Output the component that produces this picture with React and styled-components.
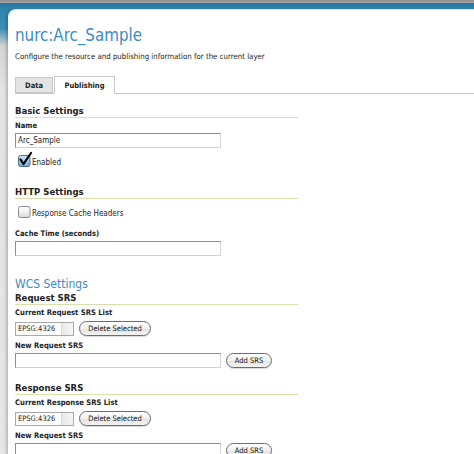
import React from 'react';
import styled, { createGlobalStyle } from 'styled-components';

const FONT = `"DejaVu Sans Condensed", "Liberation Sans", sans-serif`;

const GlobalStyle = createGlobalStyle`
  html, body {
    margin: 0;
    padding: 0;
  }
  body {
    background: #e6e6e6;
    font-family: ${FONT};
    color: #222;
  }
`;

const Page = styled.div`
  width: 474px;
  height: 454px;
  overflow: hidden;
  box-sizing: border-box;
  padding: 9px 0 0 8px;
  background: linear-gradient(
    to bottom,
    #8a8a8a 0,
    #a9a9a9 3px,
    #26769e 3px,
    #2f84ad 9px,
    #3a8cb3 28px,
    #d4d4d4 46px,
    #e3e3e3 90px,
    #e6e6e6 100%
  );
`;

const Panel = styled.div`
  height: 100%;
  box-sizing: border-box;
  background: #fff;
  border-top: 1px solid #cfe8f2;
  border-top-left-radius: 8px;
  box-shadow: -2px 1px 3px rgba(0, 0, 0, 0.2);
  padding-left: 7px;
`;

const Title = styled.h1`
  margin: 16px 0 0;
  font-size: 16.8px;
  line-height: 18px;
  font-weight: normal;
  color: #3a8cc4;
`;

const Intro = styled.p`
  margin: 8px 0 0;
  font-size: 7.8px;
  line-height: 10px;
`;

const TabBar = styled.div`
  display: flex;
  align-items: flex-end;
  height: 17px;
  margin-top: 14px;
  border-bottom: 1px solid #c4c4c4;
`;

const Tab = styled.div`
  box-sizing: border-box;
  display: flex;
  align-items: center;
  justify-content: center;
  font-size: 7.5px;
  font-weight: bold;
  border: 1px solid #c8c8c8;
  width: ${p => p.$width}px;
  height: ${p => (p.$active ? 18 : 16)}px;
  margin-left: ${p => (p.$active ? 1 : 0)}px;
  margin-bottom: ${p => (p.$active ? -1 : 0)}px;
  background: ${p => (p.$active ? '#fff' : '#e4e4e4')};
  border-bottom-color: ${p => (p.$active ? '#fff' : '#c8c8c8')};
  padding-top: ${p => (p.$active ? 1 : 0)}px;
`;

const SectionTitle = styled.h2`
  width: 283px;
  margin: ${p => p.$top}px 0 0;
  font-size: 9.5px;
  line-height: 12px;
  font-weight: bold;
  border-bottom: 1px solid #d9deab;
`;

const GroupTitle = styled.h2`
  margin: 20px 0 0;
  font-size: 12px;
  line-height: 16px;
  font-weight: normal;
  color: #3a8cc4;
`;

const Label = styled.div`
  margin-top: ${p => p.$top}px;
  font-size: 7.6px;
  line-height: 10px;
  font-weight: bold;
`;

const TextInput = styled.input`
  display: block;
  box-sizing: border-box;
  width: 206px;
  height: 15px;
  margin: 0;
  padding: 0 2px;
  font-family: ${FONT};
  font-size: 8px;
  color: #222;
  border: 1px solid;
  border-color: #8f8f8f #d2d2d2 #d2d2d2 #8f8f8f;
  outline: none;
`;

const Row = styled.div`
  display: flex;
  align-items: ${p => p.$align || 'center'};
  gap: ${p => p.$gap ?? 5}px;
  margin-top: ${p => p.$top}px;
`;

const CheckLabel = styled.span`
  font-size: 8px;
  line-height: 9px;
`;

const CheckWrap = styled.span`
  display: block;
  width: 13px;
  height: 15px;
  margin-left: 3px;
`;

const SrsList = styled.div`
  display: flex;
  box-sizing: border-box;
  width: 59px;
  height: 14px;
  border: 1px solid #a8a8a8;
  font-size: 7.5px;
  line-height: 12px;
`;

const SrsItem = styled.span`
  flex: 1;
  padding-left: 2px;
`;

const SrsScroll = styled.span`
  width: 11px;
  background: linear-gradient(to right, #e8e8e8, #f6f6f6);
  border-left: 1px solid #dcdcdc;
`;

const PillButton = styled.button`
  box-sizing: border-box;
  height: 15px;
  width: ${p => p.$width}px;
  padding: 0;
  font-family: ${FONT};
  font-size: 7.5px;
  color: #111;
  border: 1px solid #6c6c6c;
  border-radius: 8px;
  background: linear-gradient(to bottom, #ffffff, #f1f1f1 50%, #e2e2e2 51%, #f4f4f4);
  box-shadow: 0 1px 1px rgba(0, 0, 0, 0.15);
`;

const CheckBox = ({ checked }) => (
  <CheckWrap>
    <svg width="13" height="15" viewBox="0 0 13 15" style={{ overflow: 'visible' }}>
      <defs>
        <linearGradient id={checked ? 'cbOn' : 'cbOff'} x1="0" y1="0" x2="0" y2="1">
          <stop offset="0" stopColor={checked ? '#d5e9fa' : '#ffffff'} />
          <stop offset="0.5" stopColor={checked ? '#9cc6ea' : '#f0f0f0'} />
          <stop offset="1" stopColor={checked ? '#6ea6d8' : '#d8d8d8'} />
        </linearGradient>
      </defs>
      <rect
        x="0.5"
        y="3.5"
        width="11.5"
        height="11"
        rx="2"
        fill={`url(#${checked ? 'cbOn' : 'cbOff'})`}
        stroke={checked ? '#4f6f8e' : '#8a8a8a'}
      />
      {checked && (
        <path
          d="M2.5 7.5 L5.5 12 L13 1"
          fill="none"
          stroke="#000"
          strokeWidth="2.2"
          strokeLinecap="round"
          strokeLinejoin="round"
        />
      )}
    </svg>
  </CheckWrap>
);

const SrsBlock = ({ listLabel }) => (
  <>
    <Label $top={3}>{listLabel}</Label>
    <Row $top={3}>
      <SrsList>
        <SrsItem>EPSG:4326</SrsItem>
        <SrsScroll />
      </SrsList>
      <PillButton $width={72}>Delete Selected</PillButton>
    </Row>
    <Label $top={5}>New Request SRS</Label>
    <Row $top={2}>
      <TextInput defaultValue="" />
      <PillButton $width={46}>Add SRS</PillButton>
    </Row>
  </>
);

export default function App() {
  return (
    <>
      <GlobalStyle />
      <Page>
        <Panel>
          <Title>nurc:Arc_Sample</Title>
          <Intro>Configure the resource and publishing information for the current layer</Intro>
          <TabBar>
            <Tab $width={38}>Data</Tab>
            <Tab $width={61} $active>
              Publishing
            </Tab>
          </TabBar>

          <SectionTitle $top={11}>Basic Settings</SectionTitle>
          <Label $top={3}>Name</Label>
          <Row $top={2}>
            <TextInput defaultValue="Arc_Sample" />
          </Row>
          <Row $top={4} $align="flex-end" $gap={1}>
            <CheckBox checked />
            <CheckLabel>Enabled</CheckLabel>
          </Row>

          <SectionTitle $top={19}>HTTP Settings</SectionTitle>
          <Row $top={4} $align="flex-end" $gap={1}>
            <CheckBox />
            <CheckLabel>Response Cache Headers</CheckLabel>
          </Row>
          <Label $top={11}>Cache Time (seconds)</Label>
          <Row $top={2}>
            <TextInput defaultValue="" />
          </Row>

          <GroupTitle>WCS Settings</GroupTitle>
          <SectionTitle $top={0}>Request SRS</SectionTitle>
          <SrsBlock listLabel="Current Request SRS List" />

          <SectionTitle $top={14}>Response SRS</SectionTitle>
          <SrsBlock listLabel="Current Response SRS List" />
        </Panel>
      </Page>
    </>
  );
}
